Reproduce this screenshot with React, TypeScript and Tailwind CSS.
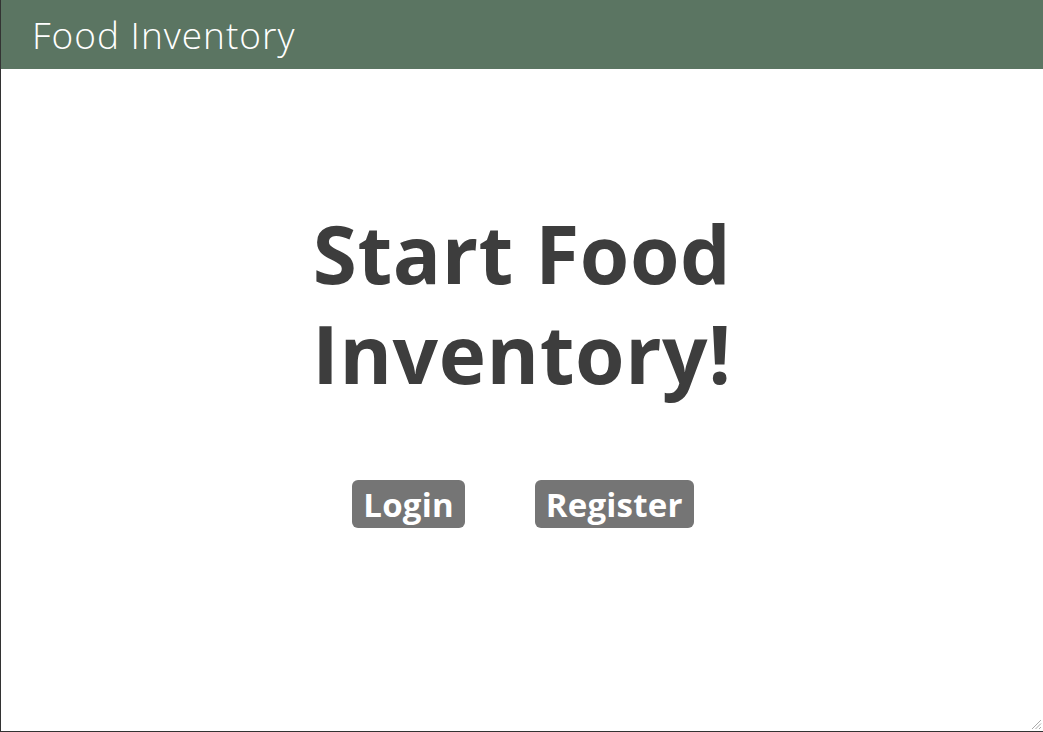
export default function App() {
  return (
    <div className="relative flex h-[732px] w-full flex-col border-b border-l border-[#333333] bg-white">
      <header className="flex h-[69px] items-center bg-[#5b7562] pl-[31px]">
        <span className="font-['Open_Sans',sans-serif] text-[37px] font-light leading-none tracking-[1px] text-white">Food Inventory</span>
      </header>
      <main className="flex flex-col items-center pt-[134px]">
        <h1 className="text-center font-['Open_Sans',sans-serif] text-[80px] font-bold leading-[100px] tracking-[0.6px] text-[#3d3d3d]">
          Start Food
          <br />
          Inventory!
        </h1>
        <div className="mt-[77px] flex gap-[70px] pl-[2px]">
          <button className="flex h-[48px] items-center rounded-[6px] bg-[#757575] px-[11px] font-['Open_Sans',sans-serif] text-[33px] font-bold leading-none tracking-[0.2px] text-white">Login</button>
          <button className="flex h-[48px] items-center rounded-[6px] bg-[#757575] px-[11px] font-['Open_Sans',sans-serif] text-[33px] font-bold leading-none tracking-[0.2px] text-white">Register</button>
        </div>
      </main>
      <svg className="absolute bottom-[1px] right-[1px]" width="13" height="13" viewBox="0 0 13 13">
        <path d="M12 3 L3 12 M12 6.5 L6.5 12 M12 10 L10 12" stroke="#aaa" strokeWidth="1" />
      </svg>
    </div>
  );
}
